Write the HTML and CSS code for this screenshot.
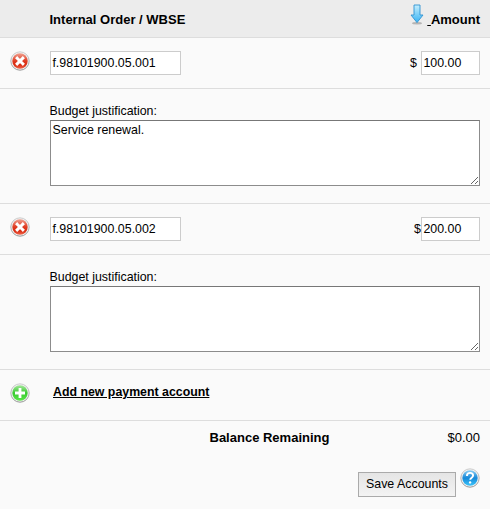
FILE: index.html
```html
<!DOCTYPE html>
<html lang="en">
<head>
<meta charset="utf-8">
<title>Payment Accounts</title>
<link rel="stylesheet" href="styles.css">
</head>
<body>
<svg class="defs" width="0" height="0" aria-hidden="true">
  <defs>
    <linearGradient id="red" x1="0" y1="0" x2="0" y2="1"><stop offset="0" stop-color="#f0a090"/><stop offset=".5" stop-color="#df3a20"/><stop offset=".75" stop-color="#d92c12"/><stop offset="1" stop-color="#f0664c"/></linearGradient>
    <linearGradient id="green" x1="0" y1="0" x2="0" y2="1"><stop offset="0" stop-color="#a4e79b"/><stop offset=".5" stop-color="#39c930"/><stop offset="1" stop-color="#5ce64a"/></linearGradient>
    <linearGradient id="blue" x1="0" y1="0" x2="0" y2="1"><stop offset="0" stop-color="#8ccff4"/><stop offset=".5" stop-color="#1688d8"/><stop offset="1" stop-color="#3bc4fa"/></linearGradient>
    <linearGradient id="rim" x1="0" y1="0" x2="0" y2="1"><stop offset="0" stop-color="#c9c9c9"/><stop offset="1" stop-color="#8e8e8e"/></linearGradient>
    <linearGradient id="arrow" x1="0" y1="0" x2="0" y2="1"><stop offset="0" stop-color="#c5effe"/><stop offset="1" stop-color="#35b2f4"/></linearGradient>
    <symbol id="ball" viewBox="0 0 20 20"><circle cx="10" cy="10" r="9.2" fill="#f0f0f0" stroke="url(#rim)" stroke-width=".9"/><circle cx="10" cy="10" r="7.7"/></symbol>
    <symbol id="remove" viewBox="0 0 20 20"><use href="#ball" fill="url(#red)"/><path d="M7.2 7.2l5.6 5.6M12.8 7.2l-5.6 5.6" stroke="#fff" stroke-width="3" stroke-linecap="square"/></symbol>
  </defs>
</svg>
<form class="accounts">
  <header class="head"><b>Internal Order / WBSE</b>
    <a class="sort"><svg width="14" height="21" viewBox="0 0 14 21"><ellipse cx="7" cy="19.2" rx="5" ry="1.2" fill="#b5b5b5"/><path d="M4 1h6v10h3L7 18.6 1 11h3z" fill="url(#arrow)" stroke="#3093d2" stroke-width=".9" stroke-linejoin="round"/></svg><span class="gap">&nbsp;</span><b>Amount</b></a>
  </header>
  <div class="row">
    <svg class="icon" width="20" height="20"><use href="#remove"/></svg>
    <input class="order" value="f.98101900.05.001"><span class="dollar wide">$</span><input class="amount" value="100.00">
  </div>
  <div class="note"><label for="n1">Budget justification:</label><textarea id="n1">Service renewal.</textarea></div>
  <div class="row">
    <svg class="icon" width="20" height="20"><use href="#remove"/></svg>
    <input class="order" value="f.98101900.05.002"><span class="dollar">$</span><input class="amount" value="200.00">
  </div>
  <div class="note"><label for="n2">Budget justification:</label><textarea id="n2"></textarea></div>
  <div class="row add">
    <svg class="icon" width="20" height="20" viewBox="0 0 20 20"><use href="#ball" fill="url(#green)"/><path d="M10 5v10M5 10h10" stroke="#fff" stroke-width="2.8"/></svg>
    <a class="link">Add new payment account</a>
  </div>
  <footer>
    <div class="balance"><b>Balance Remaining</b><span>$0.00</span></div>
    <div class="actions"><button type="button">Save Accounts</button><svg width="20" height="20" viewBox="0 0 20 20"><use href="#ball" fill="url(#blue)"/><path d="M6.9 8C6.9 5.7 8.4 4.9 10.1 4.9s3 .9 3 2.6c0 2.1-2.8 2.2-2.9 4.2" fill="none" stroke="#fff" stroke-width="1.9"/><circle cx="10.1" cy="14.4" r="1.2" fill="#fff"/></svg></div>
  </footer>
</form>
</body>
</html>
```
FILE: styles.css
```css
* { box-sizing: border-box; }
body { margin: 0; background: #fff; color: #000; font: 12.4px/15px "Liberation Sans", Arial, sans-serif; }
.defs { position: absolute; }
.accounts { margin: 0; background: #fafafa; height: 509px; }
.head { display: flex; justify-content: space-between; height: 38px; padding: 12px 10px 0 49.5px; background: #ececec; border-bottom: 1px solid #ddd; font-size: 13px; }
.sort { display: flex; }
.sort svg { margin: -8px 3.4px 0 0; }
.gap { text-decoration: underline; }
.row { display: flex; height: 51px; padding: 13px 10px 0; border-bottom: 1px solid #ddd; }
.icon { flex: none; margin-right: 20px; }
input { height: 24px; margin: 0; padding: 0 1.4px; border: 1px solid #ccc; border-radius: 0; background: #fff; font: inherit; color: #000; }
.order { width: 131px; }
.amount { width: 59px; }
.dollar { margin: 5px 0 0 auto; }
.wide { padding-right: 4px; }
.note { height: 115px; padding: 15px 10px 0 50px; border-bottom: 1px solid #ddd; }
.note label { display: block; height: 16px; margin-left: -.5px; }
textarea { display: block; width: 430px; height: 66px; margin: 0; padding: 2px 1.5px; border: 1px solid #8c8c8c; border-top-color: #777; border-radius: 0; background: #fff; font: inherit; line-height: 14px; color: #000; resize: both; }
.link { margin: 2px 0 0 3px; font-weight: bold; font-size: 12.35px; text-decoration: underline; }
footer { padding: 9px 10px 0; }
.balance { display: flex; justify-content: space-between; padding-left: 199.5px; font-size: 13px; }
.actions { display: flex; justify-content: flex-end; gap: 4px; margin-top: 23px; }
button { width: 98px; height: 25px; margin: 4px 0 0; padding: 0; border: 1px solid #aaa; background: linear-gradient(#e5e5e5, #f3f3f3); font: inherit; color: #000; }
```
